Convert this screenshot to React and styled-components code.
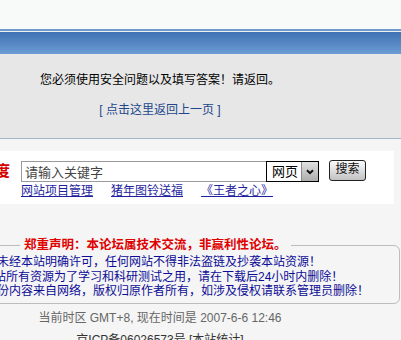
import styled, { createGlobalStyle } from 'styled-components'

const GlobalStyle = createGlobalStyle`
  html, body { margin: 0; padding: 0; }
  body {
    background: #f5f5f5;
    font-family: "Liberation Sans", "Noto Sans CJK SC", sans-serif;
    font-size: 12px;
    overflow: hidden;
  }
`

const Page = styled.div`
  width: 401px;
  height: 340px;
  overflow: hidden;
`

const TopStrip = styled.div`
  height: 29px;
  background: #f8f9f9;
  border-bottom: 2px solid #6f9ac7;
`

const NavBar = styled.div`
  height: 22px;
  border-top: 1px solid #eef2f6;
  background: linear-gradient(#3f72b4, #6c9cd3);
`

const MessagePanel = styled.div`
  background: #e7e7e7;
  border-bottom: 1px solid #a3b7cb;
  padding: 18px 81px 20px 0;
  text-align: center;
`

const Message = styled.div`
  line-height: 16px;
  color: #000;
`

const BackLink = styled.a`
  display: block;
  margin-top: 14px;
  line-height: 16px;
  color: #23468a;
  text-decoration: none;
`

const SearchCard = styled.div`
  margin: 12px 7px 0 0;
  background: #fff;
  padding: 9px 0 6px;
`

const SearchRow = styled.div`
  display: flex;
  align-items: flex-start;
  height: 22px;
`

const Brand = styled.span`
  margin-left: -20px;
  margin-right: 11px;
  width: 30px;
  line-height: 22px;
  font-size: 15px;
  font-weight: bold;
  color: #d40000;
  white-space: nowrap;
`

const KeywordInput = styled.input`
  box-sizing: border-box;
  width: 245px;
  height: 21px;
  margin: 1px 0 0;
  padding: 0 3px;
  border: 1px solid #9a9a9a;
  border-right: none;
  font-family: inherit;
  font-size: 13px;
  color: #444;
  outline: none;
`

const SelectBox = styled.div`
  box-sizing: border-box;
  display: flex;
  width: 53px;
  height: 21px;
  margin-top: 1px;
  border: 1px solid #000;
  background: #fff;
`

const SelectText = styled.span`
  flex: 1;
  padding-left: 5px;
  font-size: 13px;
  line-height: 19px;
  color: #000;
`

const SelectArrow = styled.span`
  display: flex;
  align-items: center;
  justify-content: center;
  width: 16px;
  border-left: 1px solid #8a8a8a;
  background: linear-gradient(#e2e2e2, #acacac);
`

const SearchButton = styled.button`
  box-sizing: border-box;
  display: flex;
  justify-content: center;
  width: 37px;
  height: 21px;
  margin: 0 0 0 10px;
  padding: 1px 0 0;
  border: 1px solid #222;
  border-radius: 3px;
  background: linear-gradient(#fbfbfb, #c2c2c2);
  font-family: inherit;
  font-size: 12px;
  line-height: 15px;
  color: #111;
`

const HotLinks = styled.div`
  display: flex;
  gap: 18px;
  margin-top: 2px;
  padding-left: 21px;
  line-height: 14px;
`

const HotLink = styled.a`
  color: #1f1f9f;
  text-decoration: underline;
`

const Notice = styled.fieldset`
  margin: 33px 1px 0 -12px;
  padding: 2px 0 4px 9px;
  border: 1px solid #bdbdbd;
  border-radius: 6px;
`

const NoticeTitle = styled.legend`
  margin-left: 22px;
  padding: 0 4px;
  line-height: 16px;
  font-size: 12.5px;
  font-weight: bold;
  color: #e00000;
`

const NoticeLine = styled.div`
  margin-left: ${p => p.$shift || 0}px;
  line-height: 14.5px;
  font-size: 12px;
  color: #0c0c96;
  white-space: nowrap;
`

const Footer = styled.div`
  margin-top: 6px;
  padding-right: 81px;
  text-align: center;
  line-height: 16px;
  color: #666;
`

const FooterLink = styled.a`
  color: #333;
  text-decoration: none;
`

const Icp = styled.div`
  margin-top: 6px;
  color: #333;
  white-space: nowrap;
`

function Chevron() {
  return (
    <svg width="8" height="6" viewBox="0 0 8 6">
      <path d="M1 1.2 L4 4.2 L7 1.2" fill="none" stroke="#111" strokeWidth="2" />
    </svg>
  )
}

const links = ['网站项目管理', '猪年图铃送福', '《王者之心》']

const notices = [
  { text: '未经本站明确许可，任何网站不得非法盗链及抄袭本站资源！', shift: -1 },
  { text: '站所有资源为了学习和科研测试之用，请在下载后24小时内删除！', shift: -4 },
  { text: '份内容来自网络，版权归原作者所有，如涉及侵权请联系管理员删除！', shift: -1 },
]

export default function App() {
  return (
    <Page>
      <GlobalStyle />
      <TopStrip />
      <NavBar />
      <MessagePanel>
        <Message>您必须使用安全问题以及填写答案！请返回。</Message>
        <BackLink href="#">[ 点击这里返回上一页 ]</BackLink>
      </MessagePanel>
      <SearchCard>
        <SearchRow>
          <Brand>百度</Brand>
          <KeywordInput defaultValue="请输入关键字" readOnly />
          <SelectBox>
            <SelectText>网页</SelectText>
            <SelectArrow><Chevron /></SelectArrow>
          </SelectBox>
          <SearchButton>搜索</SearchButton>
        </SearchRow>
        <HotLinks>
          {links.map(l => <HotLink key={l} href="#">{l}</HotLink>)}
        </HotLinks>
      </SearchCard>
      <Notice>
        <NoticeTitle>郑重声明：本论坛属技术交流，非赢利性论坛。</NoticeTitle>
        {notices.map(n => <NoticeLine key={n.text} $shift={n.shift}>{n.text}</NoticeLine>)}
      </Notice>
      <Footer>
        当前时区 GMT+8, 现在时间是 2007-6-6 12:46
        <Icp>京ICP备06026573号 <FooterLink href="#">[本站统计]</FooterLink></Icp>
      </Footer>
    </Page>
  )
}
